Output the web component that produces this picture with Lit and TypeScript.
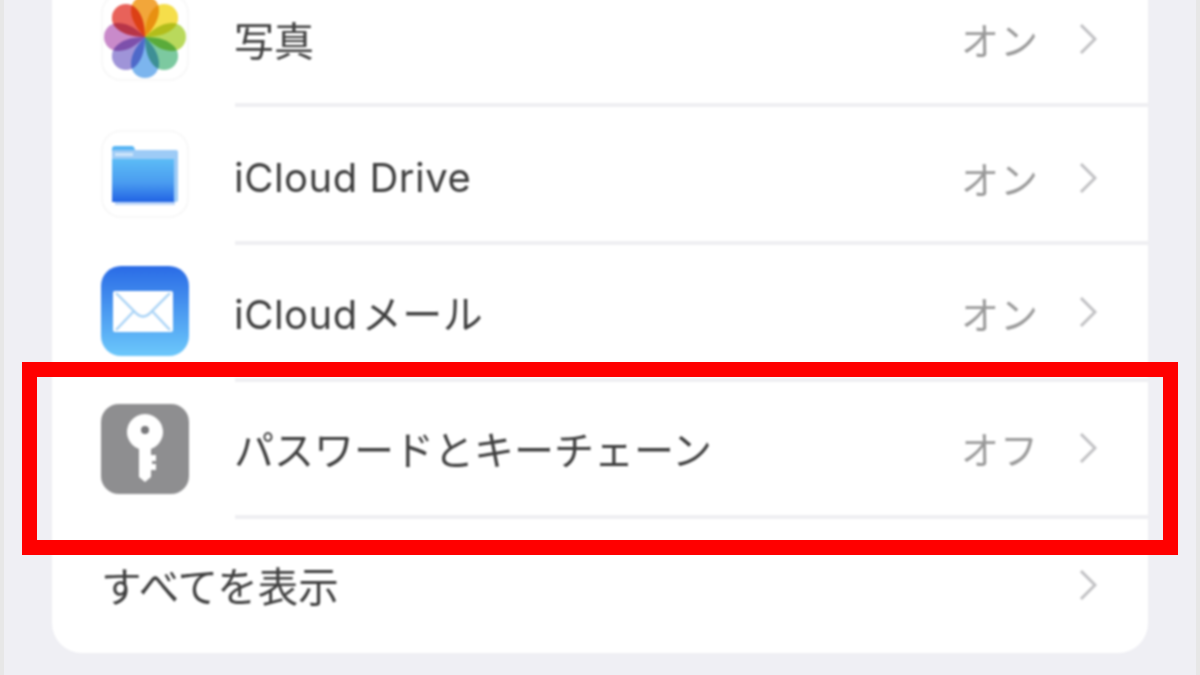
import { LitElement, html, css, svg } from 'lit';
import { customElement } from 'lit/decorators.js';

const PETALS = ['#f2a63a', '#f5de4a', '#b9d95c', '#7cc9a0', '#7cb5ee', '#9f94d8', '#c98aca', '#e8625a'];

const photosIcon = html`<svg viewBox="0 0 88 88" width="88" height="88">
  <rect x="1" y="1" width="86" height="86" rx="19" fill="#fff" stroke="#f6f6f6" stroke-width="1.5" />
  <g style="isolation:isolate">
    ${PETALS.map(
      (c, i) => svg`<path d="M44 44 C33 33 30 24 30 17 A14 14 0 0 1 58 17 C58 24 55 33 44 44 Z" fill="${c}"
        style="mix-blend-mode:multiply" transform="rotate(${i * 45} 44 44)" />`
    )}
  </g>
</svg>`;

const folderIcon = html`<svg viewBox="0 0 88 88" width="88" height="88">
  <defs>
    <linearGradient id="fold" x1="0" y1="0" x2="0" y2="1">
      <stop offset="0" stop-color="#5cbcf6" />
      <stop offset="0.55" stop-color="#4a9cf0" />
      <stop offset="1" stop-color="#2163e4" />
    </linearGradient>
  </defs>
  <rect x="1" y="1" width="86" height="86" rx="19" fill="#fff" stroke="#f6f6f6" stroke-width="1.5" />
  <path d="M11 19 q0-3 3-3 h17 q2 0 3 4 v3 h-23 z" fill="#56b4f4" />
  <rect x="14" y="72" width="60" height="3" fill="#bcd5f8" />
  <rect x="11" y="20" width="66" height="52" rx="2" fill="#9dcbf6" />
  <rect x="11" y="29" width="62" height="43" fill="url(#fold)" />
  <rect x="14" y="23" width="18" height="3" fill="#cfe6fb" />
</svg>`;

const mailIcon = html`<svg viewBox="0 0 88 90" width="88" height="90">
  <defs>
    <linearGradient id="mail" x1="0" y1="0" x2="0" y2="1">
      <stop offset="0" stop-color="#2a6be6" />
      <stop offset="1" stop-color="#6cc8fb" />
    </linearGradient>
  </defs>
  <rect width="88" height="90" rx="20" fill="url(#mail)" />
  <rect x="12" y="25" width="60" height="41" rx="2" fill="#fff" />
  <path d="M15 27 L36 48 Q42 53 48 48 L69 27 M15 64 L33 45 M69 64 L51 45" fill="none" stroke="#a9d3f6" stroke-width="2.4" />
</svg>`;

const keyIcon = html`<svg viewBox="0 0 88 90" width="88" height="90">
  <rect width="88" height="90" rx="18" fill="#8e8e90" />
  <path d="M38 45 A18 18 0 1 1 50 45 V51 H55 V57 H51 V60 H55 V66 H50 V73 L44 78 L38 73 Z" fill="#fff" />
  <circle cx="44" cy="26" r="4" fill="#77777a" />
</svg>`;

const chevron = html`<svg class="chevron" viewBox="0 0 18 32" width="18" height="32">
  <path d="M2 2 L16 16 L2 30" fill="none" stroke="#c0c0c3" stroke-width="3" />
</svg>`;

// top/bottom are small per-row nudges, the text in the source does not sit quite centred
const ROWS = [
  { icon: photosIcon, label: '写真', value: 'オン', latin: false, top: 4, bottom: 0 },
  { icon: folderIcon, label: 'iCloud Drive', value: 'オン', latin: true, top: 8, bottom: 0 },
  { icon: mailIcon, label: 'iCloud\u200Aメール', value: 'オン', latin: true, top: 2, bottom: 0 },
  { icon: keyIcon, label: 'パスワードとキーチェーン', value: 'オフ', latin: false, top: 0, bottom: 2 },
];

@customElement('app-root')
export class AppRoot extends LitElement {
  static styles = css`
    :host {
      display: block;
      position: relative;
      height: 675px;
      overflow: hidden;
      background: #e7e7e7;
      font-family: Inter, 'Noto Sans CJK JP', sans-serif;
    }

    .screen {
      display: flow-root;
      height: 100%;
      margin: 0 4px;
      padding: 0 48px;
      background: #efeff4;
    }

    .card {
      margin-top: -30px;
      height: 683px;
      border-radius: 0 0 30px 30px;
      background: #fff;
      filter: blur(0.8px);
    }

    .row {
      display: grid;
      grid-template-columns: 183px 1fr;
      height: 137.3px;
    }

    .icon {
      display: flex;
      align-items: center;
      padding: 0 0 4px 49px;
    }

    .body {
      display: flex;
      align-items: center;
      padding-right: 51px;
      border-bottom: 4px solid #efeff2;
      box-sizing: border-box;
      color: #3e3e3e;
      font-size: 40px;
    }

    .label {
      flex: 1;
      margin-left: -1px;
    }

    .latin {
      letter-spacing: 0.5px;
    }

    .value {
      margin-right: 40px;
      color: #9a9a9a;
      font-size: 38px;
      letter-spacing: 1px;
    }

    .all {
      display: flex;
      align-items: center;
      justify-content: space-between;
      height: 137px;
      padding: 0 51px 6px 49px;
      box-sizing: border-box;
      color: #3e3e3e;
      font-size: 40.5px;
    }

    .highlight {
      position: absolute;
      left: 22px;
      top: 362px;
      width: 1156px;
      height: 193px;
      box-sizing: border-box;
      border: 15px solid #ff0000;
    }
  `;

  render() {
    return html`
      <div class="screen">
        <div class="card">
          ${ROWS.map(
            (r) => html`
              <div class="row">
                <div class="icon">${r.icon}</div>
                <div class="body" style="padding-top:${r.top}px;padding-bottom:${r.bottom}px">
                  <span class="label ${r.latin ? 'latin' : ''}">${r.label}</span>
                  <span class="value">${r.value}</span>
                  ${chevron}
                </div>
              </div>
            `
          )}
          <div class="all"><span>すべてを表示</span>${chevron}</div>
        </div>
      </div>
      <div class="highlight"></div>
    `;
  }
}
